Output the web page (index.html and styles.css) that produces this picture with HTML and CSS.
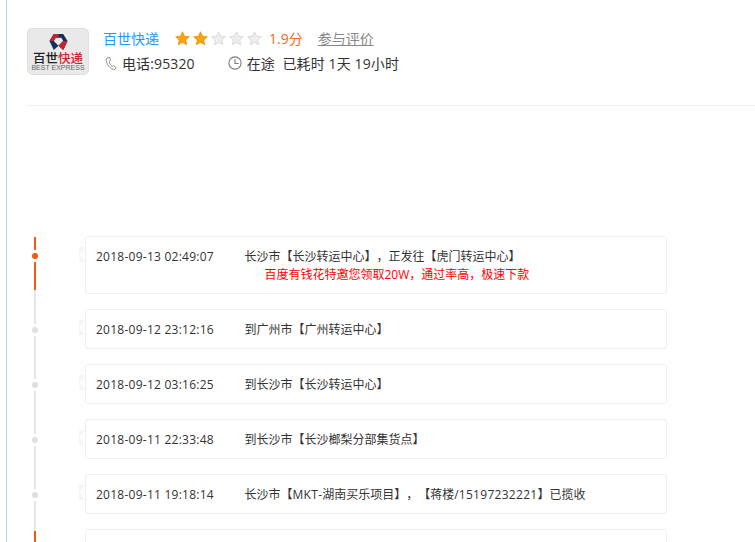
FILE: index.html
```html
<!DOCTYPE html>
<html lang="zh">
<head>
<meta charset="utf-8">
<title>百世快递</title>
<link rel="stylesheet" href="styles.css">
</head>
<body>
<main class="page">
  <header class="head">
    <div class="logo">
      <svg class="logo-mark" viewBox="0 0 20 18" width="19" height="18">
        <path d="M5 .5H15L19.500 8 15 17.500 10 13 15 8 13 4.500H7L5 8 10 13 5 17.500 .5 8Z" fill="#12305f"/>
        <path d="M5 .5H10V4.500H7L5 8H.5Z" fill="#c8202f"/>
        <path d="M15 17.500 10 13 15 8H19.500Z" fill="#c8202f"/>
      </svg>
      <div class="logo-cn"><span>百世</span><b>快递</b></div>
      <div class="logo-en">BEST EXPRESS</div>
    </div>
    <div class="info">
      <div class="row-a">
        <span class="name">百世快递</span>
        <span class="stars">
          <svg class="star on" viewBox="0 0 16 16"><path d="M8 .8l2.2 4.700 5.100.6-3.800 3.500 1 5.100L8 12.200 3.500 14.700l1-5.100L.7 6.100l5.100-.6z"/></svg>
          <svg class="star on" viewBox="0 0 16 16"><path d="M8 .8l2.2 4.700 5.100.6-3.800 3.500 1 5.100L8 12.200 3.500 14.700l1-5.100L.7 6.100l5.100-.6z"/></svg>
          <svg class="star" viewBox="0 0 16 16"><path d="M8 .8l2.2 4.700 5.100.6-3.800 3.500 1 5.100L8 12.200 3.500 14.700l1-5.100L.7 6.100l5.100-.6z"/></svg>
          <svg class="star" viewBox="0 0 16 16"><path d="M8 .8l2.2 4.700 5.100.6-3.800 3.500 1 5.100L8 12.200 3.500 14.700l1-5.100L.7 6.100l5.100-.6z"/></svg>
          <svg class="star" viewBox="0 0 16 16"><path d="M8 .8l2.2 4.700 5.100.6-3.800 3.500 1 5.100L8 12.200 3.500 14.700l1-5.100L.7 6.100l5.100-.6z"/></svg>
        </span>
        <span class="score">1.9分</span>
        <a class="rate">参与评价</a>
      </div>
      <div class="row-b">
        <span class="tel"><svg class="ico" viewBox="0 0 14 16" width="12" height="15"><path d="M3.500 1 1.500 2.500C.5 8 6 15 11.500 15L13 13 10 10.500 8.500 11.500C6.500 10.500 5 8 5 5.500L6.500 4.500 5.500 1Z" fill="none" stroke="#888" stroke-width="1.100"/></svg><span>电话:95320</span></span>
        <span class="state"><svg class="ico" viewBox="0 0 16 16" width="14" height="14"><circle cx="8" cy="8" r="7" fill="none" stroke="#777" stroke-width="1.200"/><path d="M8 3.500V8.500H12" fill="none" stroke="#777" stroke-width="1.200"/></svg><span>在途&nbsp;&nbsp;已耗时 1天 19小时</span></span>
      </div>
    </div>
  </header>

  <ul class="track">
    <li class="item first">
      <div class="rail"><i class="seg hot s1"></i><i class="dot hot"></i><i class="seg hot s2"></i><i class="seg grow"></i></div>
      <div class="card">
        <svg class="arrow" viewBox="0 0 6 15" width="6" height="15"><rect width="6" height="15" fill="#f5f5f5"/><path d="M6 0V15L0 7.500Z" fill="#fff"/></svg>
        <span class="time">2018-09-13 02:49:07</span>
        <div class="msg">长沙市【长沙转运中心】，正发往【虎门转运中心】<p class="ad">百度有钱花特邀您领取20W，通过率高，极速下款</p></div>
      </div>
    </li>
    <li class="item">
      <div class="rail"><i class="seg top"></i><i class="dot"></i><i class="seg grow"></i></div>
      <div class="card">
        <svg class="arrow" viewBox="0 0 6 15" width="6" height="15"><rect width="6" height="15" fill="#f5f5f5"/><path d="M6 0V15L0 7.500Z" fill="#fff"/></svg>
        <span class="time">2018-09-12 23:12:16</span>
        <div class="msg">到广州市【广州转运中心】</div>
      </div>
    </li>
    <li class="item">
      <div class="rail"><i class="seg top"></i><i class="dot"></i><i class="seg grow"></i></div>
      <div class="card">
        <svg class="arrow" viewBox="0 0 6 15" width="6" height="15"><rect width="6" height="15" fill="#f5f5f5"/><path d="M6 0V15L0 7.500Z" fill="#fff"/></svg>
        <span class="time">2018-09-12 03:16:25</span>
        <div class="msg">到长沙市【长沙转运中心】</div>
      </div>
    </li>
    <li class="item">
      <div class="rail"><i class="seg top"></i><i class="dot"></i><i class="seg grow"></i></div>
      <div class="card">
        <svg class="arrow" viewBox="0 0 6 15" width="6" height="15"><rect width="6" height="15" fill="#f5f5f5"/><path d="M6 0V15L0 7.500Z" fill="#fff"/></svg>
        <span class="time">2018-09-11 22:33:48</span>
        <div class="msg">到长沙市【长沙榔梨分部集货点】</div>
      </div>
    </li>
    <li class="item">
      <div class="rail"><i class="seg top"></i><i class="dot"></i><i class="seg grow"></i></div>
      <div class="card">
        <svg class="arrow" viewBox="0 0 6 15" width="6" height="15"><rect width="6" height="15" fill="#f5f5f5"/><path d="M6 0V15L0 7.500Z" fill="#fff"/></svg>
        <span class="time">2018-09-11 19:18:14</span>
        <div class="msg">长沙市【<span class="latin">MKT-</span>湖南买乐项目】，【蒋楼/<span class="latin">15197232221</span>】已揽收</div>
      </div>
    </li>
    <li class="item">
      <div class="rail"><i class="seg s4"></i><i class="seg hot grow"></i></div>
      <div class="card"></div>
    </li>
  </ul>
</main>
</body>
</html>
```
FILE: styles.css
```css
* { box-sizing: border-box; }
html, body { margin: 0; height: 542px; overflow: hidden; background: #fff; }
body { font-family: "Open Sans", "Noto Sans CJK SC", sans-serif; color: #333; font-size: 12px; text-spacing-trim: space-all; }
.page { margin-left: 6px; border-left: 1px solid #a6d8ff; padding-left: 20px; height: 542px; overflow: hidden; }

.head { display: flex; height: 106px; padding-top: 28px; border-bottom: 1px solid #f0f0f0; margin-bottom: 130px; }
.logo { width: 62px; height: 47px; background: #e9e9e9; border: 1px solid #e0e0e0; border-radius: 5px; display: flex; flex-direction: column; align-items: center; padding-top: 4px; overflow: hidden; }
.logo-mark { display: block; flex: none; }
.logo-cn { font-size: 12.500px; line-height: 12px; font-weight: 500; color: #222; margin-top: 2px; white-space: nowrap; }
.logo-cn b { color: #d3202c; font-weight: 500; }
.logo-en { font-size: 7px; line-height: 7px; margin-top: -1px; color: #666; font-family: "Liberation Sans", sans-serif; white-space: nowrap; }
.info { margin-left: 14px; }
.row-a { display: flex; align-items: center; height: 22px; margin-top: -1px; }
.name { font-size: 14px; color: #1e9bf5; }
.stars { display: flex; margin-left: 16px; gap: 3px; }
.star { width: 15px; height: 15px; fill: #eee; stroke: #ccc; stroke-width: .7; }
.star.on { fill: #f7a50d; stroke: #e08a00; }
.score { font-size: 14px; color: #f26a1d; margin-left: 7px; }
.rate { font-size: 14px; color: #888; text-decoration: underline; margin-left: 15px; }
.row-b { display: flex; align-items: center; height: 22px; margin-top: 3px; font-size: 14px; color: #333; }
.tel, .state { display: flex; align-items: center; white-space: nowrap; letter-spacing: .12px; }
.ico { margin: 0 5px 0 2px; flex: none; }
.state { margin-left: 31px; }

.track { list-style: none; margin: 0; padding: 0; width: 640px; height: 306px; overflow: hidden; }
.item { display: flex; }
.rail { width: 6px; margin-left: 5px; display: flex; flex-direction: column; align-items: center; flex: none; }
.seg { display: block; width: 2px; background: #e5e5e5; }
.seg.hot { background: #f4590f; }
.grow { flex: 1; }
.top { height: 15px; flex: none; }
.dot { display: block; flex: none; width: 6px; height: 6px; margin: 3px 0; border-radius: 50%; background: #e0e0e0; }
.dot.hot { background: #f4590f; }
.s1 { height: 13px; margin-top: 1px; flex: none; }
.s2 { height: 28px; flex: none; }
.s4 { height: 2px; flex: none; }

.card { position: relative; display: flex; flex: none; width: 582px; height: 40px; margin: 0 0 15px 47px; padding: 11px 10px 0; border: 1px solid #eee; border-radius: 3px; line-height: 17px; font-size: 12px; color: #333; background: #fff; }
.first .card { height: 58px; }
.arrow { position: absolute; left: -7px; top: 10px; }
.time { width: 148.500px; flex: none; letter-spacing: .25px; }
.msg { flex: 1; white-space: nowrap; }
.latin { letter-spacing: .3px; }
.ad { margin: 1px 0 0; padding-left: 20px; color: #f00; }
```
